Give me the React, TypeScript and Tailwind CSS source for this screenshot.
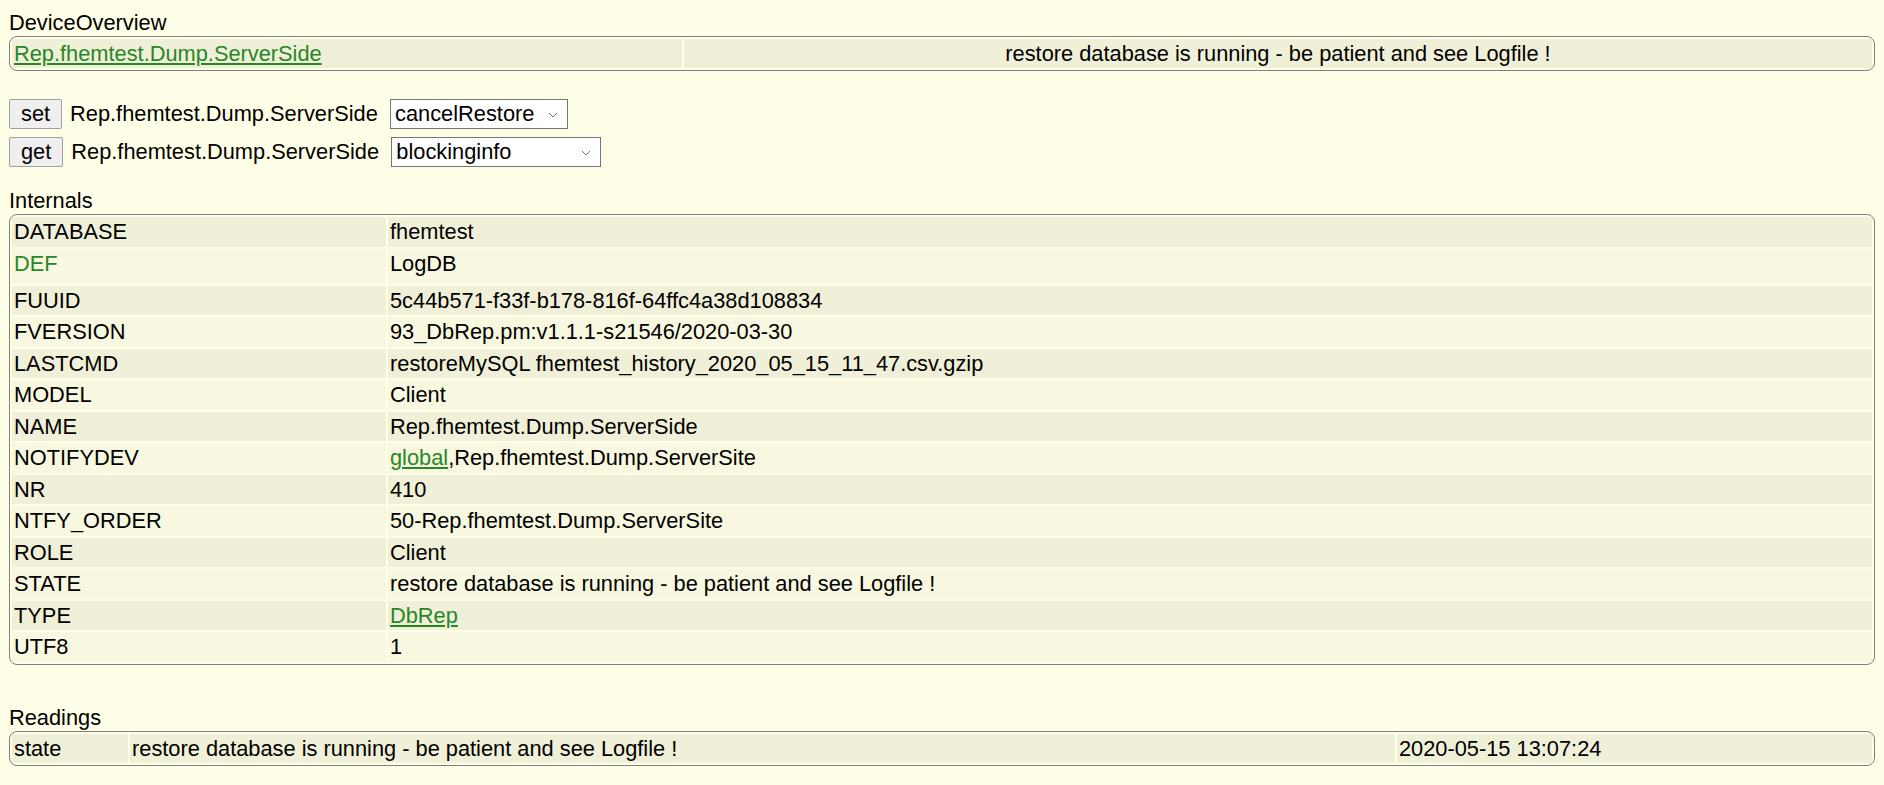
import type { ReactNode } from "react";

const linkCls = "text-[#278727] underline";
const cellCls = "px-[2px] pt-[3px] pb-[2px] align-top whitespace-nowrap";

// FHEM block table: rounded grey frame, zebra rows
function Block({ children }: { children: ReactNode }) {
  return (
    <table className="w-full border-separate border-spacing-[2px] rounded-lg border border-[#808080]">
      <tbody>{children}</tbody>
    </table>
  );
}

function rowBg(i: number) {
  return i % 2 === 0 ? "bg-[#f0f0d8]" : "bg-[#f8f8e0]";
}

function CmdSelect({ value, width }: { value: string; width: string }) {
  return (
    <div className={`relative h-[30px] ${width}`}>
      <select
        defaultValue={value}
        className="h-full w-full appearance-none border border-[#767676] bg-white pl-[4px] text-[21.8px] leading-[24px] outline-none"
      >
        <option>{value}</option>
      </select>
      <svg
        className="pointer-events-none absolute right-[10px] top-[13px]"
        width="10"
        height="6"
        viewBox="0 0 10 6"
        fill="none"
      >
        <path d="M1 1l4 4 4-4" stroke="#6d6d6d" strokeWidth="1" />
      </svg>
    </div>
  );
}

function CmdRow({ cmd, value, width }: { cmd: string; value: string; width: string }) {
  return (
    <div className="flex h-[30px] items-center">
      <button className="h-[30px] rounded-[2px] border border-[#a0a0a0] bg-[#efefef] px-[11px] leading-[24px]">
        {cmd}
      </button>
      <div className="ml-[8px] w-[320px] shrink-0 whitespace-nowrap">Rep.fhemtest.Dump.ServerSide</div>
      <CmdSelect value={value} width={width} />
    </div>
  );
}

const internals: { name: string; value: ReactNode; tall?: boolean; green?: boolean }[] = [
  { name: "DATABASE", value: "fhemtest" },
  { name: "DEF", value: "LogDB", tall: true, green: true },
  { name: "FUUID", value: "5c44b571-f33f-b178-816f-64ffc4a38d108834" },
  { name: "FVERSION", value: "93_DbRep.pm:v1.1.1-s21546/2020-03-30" },
  { name: "LASTCMD", value: "restoreMySQL fhemtest_history_2020_05_15_11_47.csv.gzip" },
  { name: "MODEL", value: "Client" },
  { name: "NAME", value: "Rep.fhemtest.Dump.ServerSide" },
  {
    name: "NOTIFYDEV",
    value: (
      <>
        <a href="#" className={linkCls}>global</a>,Rep.fhemtest.Dump.ServerSite
      </>
    ),
  },
  { name: "NR", value: "410" },
  { name: "NTFY_ORDER", value: "50-Rep.fhemtest.Dump.ServerSite" },
  { name: "ROLE", value: "Client" },
  { name: "STATE", value: "restore database is running - be patient and see Logfile !" },
  { name: "TYPE", value: <a href="#" className={linkCls}>DbRep</a> },
  { name: "UTF8", value: "1" },
];

export default function App() {
  return (
    <div className="min-h-screen bg-[#ffffe7] px-[9px] pt-[11px] font-['Liberation_Sans',Arial,sans-serif] text-[21.8px] leading-[24px] text-black">
      <div>DeviceOverview</div>
      <div className="mt-px">
        <Block>
          <tr>
            <td className={`${cellCls} w-[670px] bg-[#f0f0d8]`}>
              <a href="#" className={linkCls}>Rep.fhemtest.Dump.ServerSide</a>
            </td>
            <td className={`${cellCls} bg-[#f0f0d8] text-center`}>
              restore database is running - be patient and see Logfile !
            </td>
          </tr>
        </Block>
      </div>

      <div className="mt-[28px] flex flex-col gap-[8px]">
        <CmdRow cmd="set" value="cancelRestore" width="w-[178px]" />
        <CmdRow cmd="get" value="blockinginfo" width="w-[210px]" />
      </div>

      <div className="mt-[22px]">Internals</div>
      <div className="mt-[1px]">
        <Block>
          {internals.map((r, i) => (
            <tr key={r.name}>
              <td className={`${cellCls} w-[374px] ${rowBg(i)} ${r.tall ? "h-[35px]" : "h-[29.5px]"} ${r.green ? "text-[#278727]" : ""}`}>
                {r.name}
              </td>
              <td className={`${cellCls} ${rowBg(i)}`}>{r.value}</td>
            </tr>
          ))}
        </Block>
      </div>

      <div className="mt-[41px]">Readings</div>
      <div className="mt-[1px]">
        <Block>
          <tr>
            <td className={`${cellCls} w-[116px] bg-[#f0f0d8]`}>state</td>
            <td className={`${cellCls} bg-[#f0f0d8]`}>restore database is running - be patient and see Logfile !</td>
            <td className={`${cellCls} w-[475px] bg-[#f0f0d8]`}>2020-05-15 13:07:24</td>
          </tr>
        </Block>
      </div>
    </div>
  );
}
